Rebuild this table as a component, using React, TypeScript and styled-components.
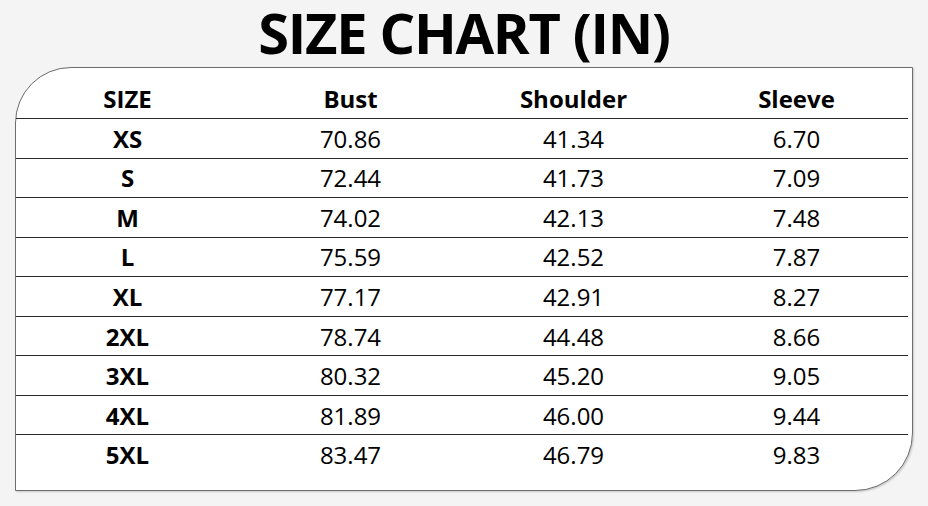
import React from "react";
import styled, { createGlobalStyle } from "styled-components";

const GlobalStyle = createGlobalStyle`
  html, body {
    margin: 0;
    padding: 0;
    background: #f4f4f4;
  }
  body {
    font-family: "Open Sans", "Noto Sans", sans-serif;
    color: #000;
  }
`;

const Page = styled.div`
  width: 928px;
  height: 506px;
  box-sizing: border-box;
  padding: 0 15px;
  display: flex;
  flex-direction: column;
  align-items: stretch;
`;

const Title = styled.h1`
  margin: 0;
  text-align: center;
  font-size: 56px;
  line-height: 64px;
  font-weight: 700;
  letter-spacing: -1.3px;
`;

const Card = styled.div`
  margin-top: 3px;
  width: 898px;
  box-sizing: border-box;
  padding: 0 4px 16px 0;
  background: #fff;
  border: 1px solid #6e6e6e;
  border-radius: 56px 0 58px 0;
  box-shadow: 1px 1px 2px rgba(0, 0, 0, 0.18);
`;

const Row = styled.div<{ $head?: boolean; $last?: boolean }>`
  display: grid;
  grid-template-columns: repeat(4, 223px);
  align-items: ${(p) => (p.$head ? "end" : "center")};
  height: ${(p) => (p.$head ? "47px" : "38.55px")};
  padding-bottom: ${(p) => (p.$head ? "3px" : "0")};
  box-sizing: content-box;
  border-bottom: ${(p) => (p.$last ? "none" : "1px solid #2a2a2a")};
`;

const Cell = styled.div<{ $bold?: boolean }>`
  text-align: center;
  font-size: 24px;
  line-height: 33px;
  font-weight: ${(p) => (p.$bold ? 700 : 400)};
`;

const headers = ["SIZE", "Bust", "Shoulder", "Sleeve"];

const rows: [string, string, string, string][] = [
  ["XS", "70.86", "41.34", "6.70"],
  ["S", "72.44", "41.73", "7.09"],
  ["M", "74.02", "42.13", "7.48"],
  ["L", "75.59", "42.52", "7.87"],
  ["XL", "77.17", "42.91", "8.27"],
  ["2XL", "78.74", "44.48", "8.66"],
  ["3XL", "80.32", "45.20", "9.05"],
  ["4XL", "81.89", "46.00", "9.44"],
  ["5XL", "83.47", "46.79", "9.83"],
];

const App = () => (
  <Page>
    <GlobalStyle />
    <Title>SIZE CHART (IN)</Title>
    <Card>
      <Row $head>
        {headers.map((h) => (
          <Cell key={h} $bold>
            {h}
          </Cell>
        ))}
      </Row>
      {rows.map((r, i) => (
        <Row key={r[0]} $last={i === rows.length - 1}>
          {r.map((v, j) => (
            <Cell key={j} $bold={j === 0}>
              {v}
            </Cell>
          ))}
        </Row>
      ))}
    </Card>
  </Page>
);

export default App;
